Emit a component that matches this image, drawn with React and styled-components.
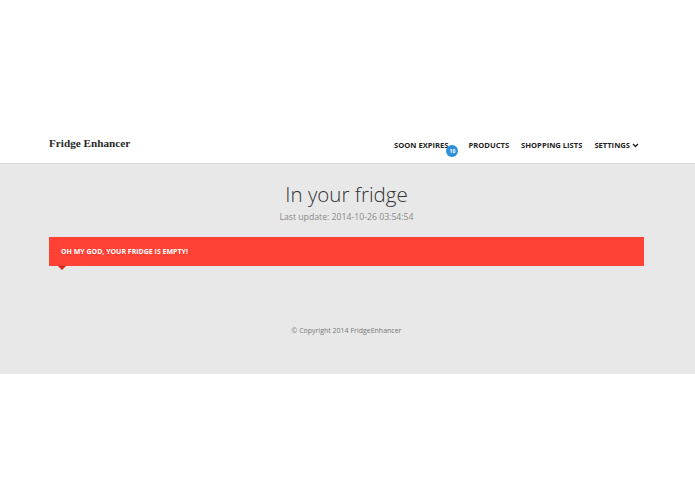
import React from "react";
import styled, {createGlobalStyle} from "styled-components";

const GlobalStyle = createGlobalStyle`
    body {
        margin: 0;
        background: #fff;
        font-family: "Open Sans", "Liberation Sans", sans-serif;
    }
`;

const Page = styled.div`
    width: 695px;
    height: 494px;
    display: flex;
    flex-direction: column;
`;

const Navbar = styled.nav`
    margin-top: 125px;
    height: 38px;
    border-bottom: 1px solid #d9d9d9;
    display: flex;
    align-items: center;
    justify-content: space-between;
    padding: 0 56px 0 49px;
`;

const Brand = styled.a`
    font-family: "Liberation Serif", "DejaVu Serif", serif;
    font-size: 11.2px;
    font-weight: bold;
    color: #2a2a2a;
    margin-top: -3px;
`;

const Menu = styled.div`
    display: flex;
    align-items: center;
    gap: 12px;
    margin-top: 2px;
`;

const MenuItem = styled.a`
    position: relative;
    font-size: 7.6px;
    font-weight: 700;
    color: #222;
    text-transform: uppercase;
    display: flex;
    align-items: center;
    gap: 2px;
    margin-right: ${(p) => (p.$badge ? "8px" : "0")};
`;

const Badge = styled.span`
    position: absolute;
    right: -10px;
    top: 5px;
    width: 12px;
    height: 12px;
    border-radius: 50%;
    background: #2f8fd8;
    color: #fff;
    font-size: 5px;
    font-weight: 700;
    display: flex;
    align-items: center;
    justify-content: center;
`;

const Main = styled.main`
    height: 210px;
    background: #e8e8e8;
    display: flex;
    flex-direction: column;
    align-items: center;
    padding: 0 51px 0 49px;
`;

const Title = styled.h1`
    margin: 15px 0 0;
    font-size: 20.5px;
    font-weight: 300;
    color: #333;
    line-height: 30px;
`;

const Updated = styled.p`
    margin: 1px 0 0;
    font-size: 8.7px;
    color: #888;
    line-height: 14px;
`;

const Alert = styled.div`
    position: relative;
    align-self: stretch;
    margin-top: 13px;
    height: 29px;
    background: #ff4136;
    color: #fff;
    font-size: 7px;
    font-weight: 700;
    text-transform: uppercase;
    display: flex;
    align-items: center;
    padding-left: 12px;

    &::after {
        content: "";
        position: absolute;
        left: 9px;
        bottom: -4px;
        border-left: 4px solid transparent;
        border-right: 4px solid transparent;
        border-top: 4px solid #e0231a;
    }
`;

const Footer = styled.footer`
    margin-top: 60px;
    font-size: 7px;
    color: #777;
`;

const Chevron = () => (
    <svg width="7" height="5" viewBox="0 0 7 5">
        <path d="M1 1 L3.5 3.5 L6 1" fill="none" stroke="#222" strokeWidth="1.4" />
    </svg>
);

export default function App() {
    return (
        <Page>
            <GlobalStyle />
            <Navbar>
                <Brand>Fridge Enhancer</Brand>
                <Menu>
                    <MenuItem $badge>
                        Soon expires
                        <Badge>10</Badge>
                    </MenuItem>
                    <MenuItem>Products</MenuItem>
                    <MenuItem>Shopping lists</MenuItem>
                    <MenuItem>
                        Settings
                        <Chevron />
                    </MenuItem>
                </Menu>
            </Navbar>
            <Main>
                <Title>In your fridge</Title>
                <Updated>Last update: 2014-10-26 03:54:54</Updated>
                <Alert>Oh my god, your fridge is empty!</Alert>
                <Footer>© Copyright 2014 FridgeEnhancer</Footer>
            </Main>
        </Page>
    );
}
